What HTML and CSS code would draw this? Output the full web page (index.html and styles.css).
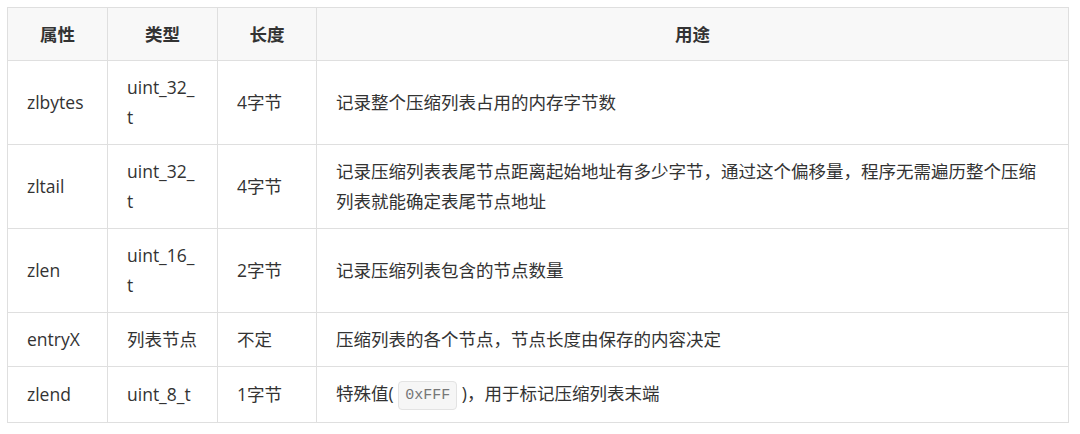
FILE: index.html
```html
<!DOCTYPE html>
<html lang="zh-CN">
<head>
    <meta charset="UTF-8">
    <meta name="viewport" content="width=device-width, initial-scale=1.0">
    <title>ziplist 结构</title>
    <link rel="stylesheet" href="styles.css">
</head>
<body>
    <table class="ziplist">
        <colgroup>
            <col class="col-attr">
            <col class="col-type">
            <col class="col-len">
            <col class="col-desc">
        </colgroup>
        <thead>
            <tr>
                <th>属性</th>
                <th>类型</th>
                <th>长度</th>
                <th>用途</th>
            </tr>
        </thead>
        <tbody>
            <tr>
                <td>zlbytes</td>
                <td class="type">uint_32_t</td>
                <td>4字节</td>
                <td>记录整个压缩列表占用的内存字节数</td>
            </tr>
            <tr>
                <td>zltail</td>
                <td class="type">uint_32_t</td>
                <td>4字节</td>
                <td>记录压缩列表表尾节点距离起始地址有多少字节，通过这个偏移量，程序无需遍历整个压缩列表就能确定表尾节点地址</td>
            </tr>
            <tr>
                <td>zlen</td>
                <td class="type">uint_16_t</td>
                <td>2字节</td>
                <td>记录压缩列表包含的节点数量</td>
            </tr>
            <tr>
                <td>entryX</td>
                <td class="type">列表节点</td>
                <td>不定</td>
                <td>压缩列表的各个节点，节点长度由保存的内容决定</td>
            </tr>
            <tr>
                <td>zlend</td>
                <td class="type">uint_8_t</td>
                <td>1字节</td>
                <td>特殊值( <code>0xFFF</code> )，用于标记压缩列表末端</td>
            </tr>
        </tbody>
    </table>
</body>
</html>
```

FILE: styles.css
```css
* {
    box-sizing: border-box;
}

body {
    margin: 7px;
    background: #fff;
    font-family: "Open Sans", "Noto Sans CJK SC", sans-serif;
    font-size: 17.5px;
    color: #333;
}

.ziplist {
    width: 1062px;
    table-layout: fixed;
    border-collapse: collapse;
}

.col-attr { width: 100px; }
.col-type { width: 110px; }
.col-len  { width: 99px; }

th, td {
    border: 1px solid #dfdfdf;
    padding: 11px 19px 12px;
    line-height: 30px;
    vertical-align: middle;
    text-align: left;
}

th {
    background-color: #f8f8f8;
    font-weight: bold;
    text-align: center;
    padding-top: 11px;
    padding-bottom: 11px;
}

.type {
    word-break: break-all;
}

code {
    display: inline-block;
    font-family: "Liberation Mono", monospace;
    font-size: 15px;
    line-height: 27px;
    color: #777;
    background-color: #f6f6f6;
    border: 1px solid #e3e3e3;
    border-radius: 4px;
    padding: 0 6px;
    vertical-align: middle;
}
```
